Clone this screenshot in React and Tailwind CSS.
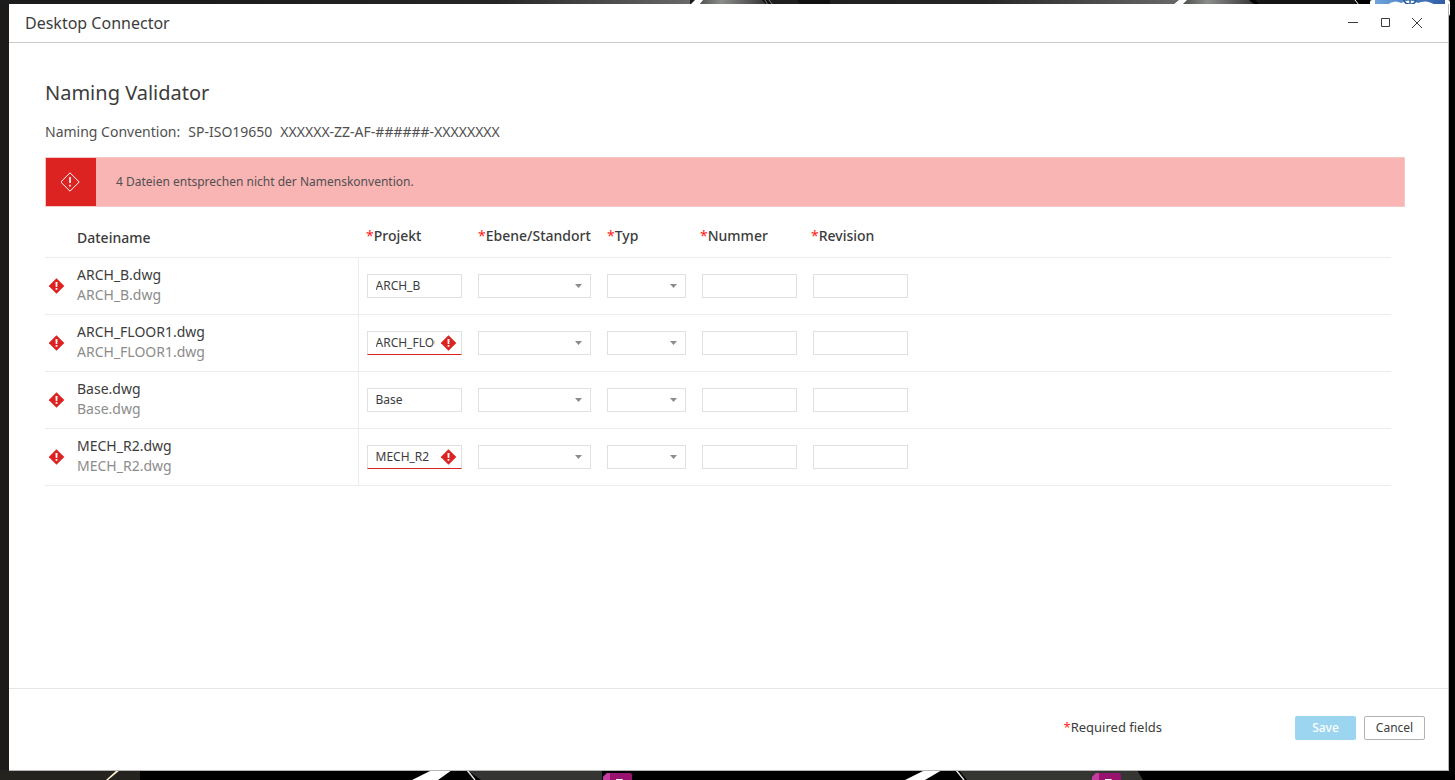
const COLUMNS = [
  { key: 'project',  label: 'Projekt',        type: 'text' },
  { key: 'level',    label: 'Ebene/Standort', type: 'select' },
  { key: 'type',     label: 'Typ',            type: 'select' },
  { key: 'number',   label: 'Nummer',         type: 'text' },
  { key: 'revision', label: 'Revision',       type: 'text' },
];

const FILES = [
  { name: 'ARCH_B.dwg',      project: 'ARCH_B' },
  { name: 'ARCH_FLOOR1.dwg', project: 'ARCH_FLOOR1', invalid: true },
  { name: 'Base.dwg',        project: 'Base' },
  { name: 'MECH_R2.dwg',     project: 'MECH_R2', invalid: true },
];

function Wallpaper() {
  return (
    <svg className="absolute inset-0 h-full w-full" viewBox="0 0 1455 780" preserveAspectRatio="none" aria-hidden="true">
      <defs>
        <linearGradient id="sheen" x1="0" x2="1">
          <stop offset="0" stopColor="#1c1c1c" />
          <stop offset="0.6" stopColor="#262626" />
          <stop offset="1" stopColor="#686868" />
        </linearGradient>
        <linearGradient id="knob" x1="0" x2="1">
          <stop offset="0" stopColor="#4b4d4b" />
          <stop offset="0.35" stopColor="#8a8d8a" />
          <stop offset="1" stopColor="#343434" />
        </linearGradient>
        <linearGradient id="cloud" x1="0" x2="1">
          <stop offset="0" stopColor="#6fa3dc" />
          <stop offset="1" stopColor="#2d5ca5" />
        </linearGradient>
      </defs>
      <rect width="1455" height="780" fill="#000" />
      <rect width="9" height="780" fill="#1c1b19" />

      <rect width="210" height="5" fill="#1c1c1c" />
      <rect x="210" width="480" height="5" fill="url(#sheen)" />
      <rect x="690" width="490" height="5" fill="url(#sheen)" />
      <path d="M702 0h60l5 5h-70z" fill="url(#knob)" />
      <path d="M690 5l5-5h8l-4 5zM1173 5l6-5h9l-5 5z" fill="#fff" />
      <path d="M762 0l5 5h5l-5-5z" fill="#111" />
      <path d="M765 0l3 5M769 0l4 5" stroke="#777" />
      <path d="M797 0h33v5h-29z" fill="#111" />
      <path d="M1187 0h62l6 5h-73z" fill="url(#knob)" />
      <path d="M1255 0h100v5h-95z" fill="#151515" />
      <path d="M1355 0l4 5" stroke="#fff" />
      <rect x="1370" width="80" height="16" rx="2" fill="#fff" />
      <rect x="1375" width="70" height="6" fill="url(#cloud)" />
      <path d="M1387 5q7-6 14-2q9-5 17 0q9-4 17 2z" fill="#fff" />
      <path d="M1404 0q1 4 5 4M1410 0v4M1416 0q-1 4-5 4" fill="none" stroke="#235b98" strokeWidth="1.5" />

      <rect y="770" width="140" height="10" fill="#25231f" />
      <path d="M106 780l11-10h3l-12 10z" fill="#fff3d0" />
      <path d="M467 770l14 10h121v-10z" fill="#343532" />
      <path d="M412 780l20-10h20l-14 10zM905 780l20-10h17l-17 10z" fill="#fff" />
      <path d="M467 770l8 10M956 770l8 10" stroke="#ddd" strokeWidth="1.5" />
      <path d="M959 770l8 10h176l-6-10z" fill="#353532" />
      {[603, 1092].map((x) => (
        <g key={x} transform={`translate(${x} 773)`}>
          <path d="M4 0h23q2 0 2 2v6H0V4z" fill="#97136f" />
          <path d="M4 0h3v8H0V4z" fill="#c43c9f" />
          <path d="M13 6h6q1 0 1 2h-7z" fill="#fff" />
        </g>
      ))}
    </svg>
  );
}

function AlertIcon() {
  return (
    <svg className="block size-4 shrink-0" viewBox="0 0 16 16" aria-hidden="true">
      <path d="M7.5 0.2L15.3 8L7.5 15.8L-0.3 8z" fill="#dd2222" />
      <path d="M6.5 4h2l-0.2 5H6.7zM6.6 10h1.8v1.7H6.6z" fill="#fff" />
    </svg>
  );
}

function TitleBar() {
  return (
    <header className="flex h-[39px] shrink-0 items-center justify-between border-b border-[#c9c9c9] pl-4 pr-[21px]">
      <span className="text-base text-[#3c3c3c]">Desktop Connector</span>
      <div className="flex gap-3 text-[#3c3c3c]">
        <button type="button" aria-label="Minimize" className="flex size-5 items-center justify-center">
          <svg className="h-3 w-3" viewBox="0 0 12 12" stroke="currentColor"><path d="M1 5.5h10" /></svg>
        </button>
        <button type="button" aria-label="Maximize" className="flex size-5 items-center justify-center">
          <svg className="h-3 w-3" viewBox="0 0 12 12" fill="none" stroke="currentColor"><path d="M2.5 1.5h8v8h-8z" /></svg>
        </button>
        <button type="button" aria-label="Close" className="flex size-5 items-center justify-center">
          <svg className="h-3 w-3" viewBox="0 0 12 12" stroke="currentColor"><path d="M1 1l10 10M11 1L1 11" /></svg>
        </button>
      </div>
    </header>
  );
}

function Field({ column, file }) {
  const label = `${column.label} ${file.name}`;

  if (column.type === 'select') {
    return (
      <div className="relative">
        <select aria-label={label} className="block h-6 w-full appearance-none border border-[#e0e0e0] bg-white px-2 text-xs" />
        <svg className="pointer-events-none absolute right-2 top-2 h-2 w-2" viewBox="0 0 8 8" aria-hidden="true">
          <path d="M0 2h7L3.5 6z" fill="#8c8c8c" />
        </svg>
      </div>
    );
  }

  const invalid = column.key === 'project' && file.invalid;
  return (
    <div
      className={`flex h-6 items-center border-x border-t border-b bg-white pl-2 pr-1 ${
        invalid ? 'border-x-[#e0e0e0] border-t-[#e0e0e0] border-b-[#dd2222]' : 'border-[#e0e0e0]'
      }`}
    >
      <input
        aria-label={label}
        aria-invalid={invalid}
        defaultValue={file[column.key] ?? ''}
        className="mr-1.5 h-5 w-full min-w-0 bg-transparent text-xs text-[#3c3c3c] outline-none"
      />
      {invalid && <AlertIcon />}
    </div>
  );
}

function FileTable() {
  return (
    <table className="mt-3 w-full table-fixed border-collapse">
      <colgroup>
        <col className="w-8" />
        <col className="w-[281px]" />
        <col className="w-[112px]" />
        <col className="w-[129px]" />
        <col className="w-[95px]" />
        <col className="w-[111px]" />
        <col className="w-[111px]" />
        <col />
      </colgroup>
      <thead>
        <tr className="h-[38px] border-b border-[#ececec] text-left text-sm text-[#3c3c3c]">
          <th />
          <th className="font-medium">Dateiname</th>
          {COLUMNS.map((col) => (
            <th
              key={col.key}
              className={`whitespace-nowrap pb-1 font-medium ${['number', 'revision'].includes(col.key) ? 'pl-1.5' : 'pl-2'}`}
            >
              <span className="font-normal text-[#ff1a1a]">*</span>{col.label}
            </th>
          ))}
          <th />
        </tr>
      </thead>
      <tbody>
        {FILES.map((file) => (
          <tr key={file.name} className="h-[57px] border-b border-[#ececec]">
            <td className="pl-1"><AlertIcon /></td>
            <td className="border-r border-[#ececec] pb-0.5 text-sm">
              <div className="text-[#3c3c3c]">{file.name}</div>
              <div className="text-[#8c8c8c]">{file.name}</div>
            </td>
            {COLUMNS.map((col) => (
              <td key={col.key} className="px-2"><Field column={col} file={file} /></td>
            ))}
            <td />
          </tr>
        ))}
      </tbody>
    </table>
  );
}

export default function App() {
  return (
    <div className="relative flex min-h-screen flex-col pb-[9px] pl-[9px] pr-[6px] pt-1 font-['Noto_Sans',sans-serif]">
      <Wallpaper />
      <div className="relative flex grow flex-col border-b border-r border-[#b5b5b5] bg-white">
        <TitleBar />

        <main className="grow pl-9 pr-[43px] pt-9">
          <h1 className="text-xl leading-7 text-[#3c3c3c]">Naming Validator</h1>
          <p className="mt-[15px] flex gap-2 text-sm text-[#505050]">
            <span>Naming Convention:</span>
            <span>SP-ISO19650</span>
            <span>XXXXXX-ZZ-AF-######-XXXXXXXX</span>
          </p>

          <div role="alert" className="mt-[15px] flex h-[50px] items-center border border-[#f5c8c8] bg-[#f9b4b4]">
            <div className="flex h-full w-[50px] items-center justify-center bg-[#dd2222]">
              <svg className="size-5" viewBox="0 0 20 20" fill="none" stroke="#fff" aria-hidden="true">
                <path d="M9 0.8L18.2 10L9 19.2L-0.2 10z" />
                <path d="M9 5v6M9 12.8v1.7" strokeWidth="1.6" />
              </svg>
            </div>
            <p className="ml-5 text-xs text-[#505050]">4 Dateien entsprechen nicht der Namenskonvention.</p>
          </div>

          <div className="pr-[14px]">
            <FileTable />
          </div>
        </main>

        <footer className="flex h-[82px] shrink-0 items-center justify-end border-t border-[#e6e6e6] pb-[3px] pr-[23px] text-[#3c3c3c]">
          <span className="mr-[133px] text-[13px]">
            <span className="text-[#ff1a1a]">*</span>Required fields
          </span>
          <div className="flex gap-2 text-xs">
            <button type="button" disabled className="h-6 w-[61px] rounded-xs bg-[#9bd5ef] font-medium text-white">Save</button>
            <button type="button" className="h-6 w-[61px] rounded-xs border border-[#b3b3b3] bg-white">Cancel</button>
          </div>
        </footer>
      </div>
    </div>
  );
}
